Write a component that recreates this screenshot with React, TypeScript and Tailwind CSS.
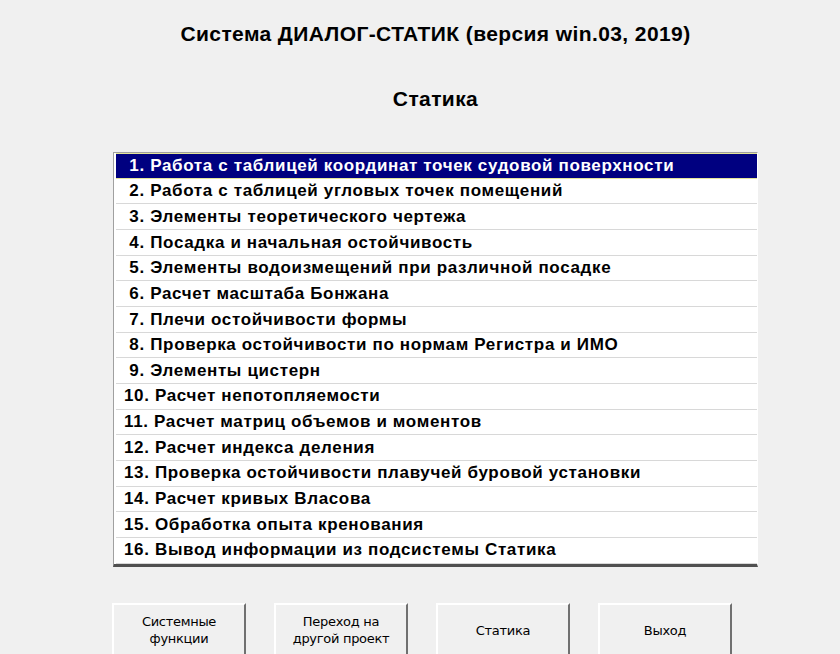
import { useState } from 'react';

const items = [
    ' 1. Работа с таблицей координат точек судовой поверхности',
    ' 2. Работа с таблицей угловых точек помещений',
    ' 3. Элементы теоретического чертежа',
    ' 4. Посадка и начальная остойчивость',
    ' 5. Элементы водоизмещений при различной посадке',
    ' 6. Расчет масштаба Бонжана',
    ' 7. Плечи остойчивости формы',
    ' 8. Проверка остойчивости по нормам Регистра и ИМО',
    ' 9. Элементы цистерн',
    '10. Расчет непотопляемости',
    '11. Расчет матриц объемов и моментов',
    '12. Расчет индекса деления',
    '13. Проверка остойчивости плавучей буровой установки',
    '14. Расчет кривых Власова',
    '15. Обработка опыта кренования',
    '16. Вывод информации из подсистемы Статика',
];

const buttons = [
    ['Системные', 'функции'],
    ['Переход на', 'другой проект'],
    ['Статика'],
    ['Выход'],
];

export default function App() {
    const [selected, setSelected] = useState(0);

    return (
        <div className="w-[840px] h-[654px] overflow-hidden bg-[#f0f0f0] text-black font-['Liberation_Sans',Arial,sans-serif]">
            <div className="ml-[113px] w-[645px] flex flex-col items-center">
                <h1 className="mt-[21px] h-[26px] leading-[26px] text-[21px] font-bold tracking-[0.4px] whitespace-nowrap">
                    Система ДИАЛОГ-СТАТИК (версия win.03, 2019)
                </h1>
                <h2 className="mt-[39px] h-[26px] leading-[26px] text-[21px] font-bold tracking-[0.4px]">Статика</h2>
            </div>

            {/* Listbox */}
            <div className="mt-[40px] ml-[113px] w-[645px] h-[415px] box-border bg-white border-t border-l border-t-[#a0a0a0] border-l-[#a0a0a0] border-r border-r-white border-b-[3px] border-b-[#505050]">
                <ul className="py-0 pl-[2px] pr-0">
                    {items.map((label, i) => (
                        <li
                            key={i}
                            onClick={() => setSelected(i)}
                            className={`h-[25.67px] box-border flex items-center pl-[8px] whitespace-pre text-[17px] font-bold tracking-[0.65px] ${
                                i === selected
                                    ? 'bg-[#000080] text-white border-y border-[#e4e49a]'
                                    : 'border-b border-[#d8d8d8]'
                            }`}
                        >
                            {label}
                        </li>
                    ))}
                </ul>
            </div>

            {/* Bottom buttons */}
            <div className="mt-[36px] ml-[112px] flex gap-[28px]">
                {buttons.map((lines, i) => (
                    <button
                        key={i}
                        className="w-[134px] h-[60px] box-border bg-[#f0f0f0] border-t-2 border-l-2 border-t-white border-l-white border-r-2 border-r-[#707070] flex flex-col items-center justify-start pt-[8px] text-[13px] leading-[17px] text-black font-['DejaVu_Sans','Liberation_Sans',sans-serif] tracking-[-0.3px]"
                    >
                        {lines.length === 1 ? (
                            <span className="mt-[9px]">{lines[0]}</span>
                        ) : (
                            lines.map((l) => <span key={l}>{l}</span>)
                        )}
                    </button>
                ))}
            </div>
        </div>
    );
}
